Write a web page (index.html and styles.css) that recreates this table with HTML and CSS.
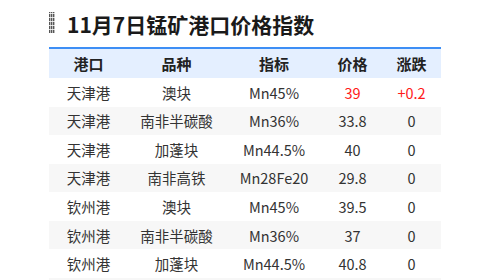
FILE: index.html
```html
<!DOCTYPE html>
<html lang="zh-CN">
<head>
<meta charset="utf-8">
<title>11月7日锰矿港口价格指数</title>
<link rel="stylesheet" href="styles.css">
</head>
<body>
<div class="wrap">
  <div class="title">
    <span class="mark"></span>
    <h1>11月7日锰矿港口价格指数</h1>
  </div>
  <table class="prices">
    <colgroup>
      <col class="c1"><col class="c2"><col class="c3"><col class="c4"><col class="c5">
    </colgroup>
    <thead>
      <tr><th>港口</th><th>品种</th><th>指标</th><th>价格</th><th>涨跌</th></tr>
    </thead>
    <tbody>
      <tr><td>天津港</td><td>澳块</td><td>Mn45%</td><td class="up">39</td><td class="up">+0.2</td></tr>
      <tr><td>天津港</td><td>南非半碳酸</td><td>Mn36%</td><td>33.8</td><td>0</td></tr>
      <tr><td>天津港</td><td>加蓬块</td><td>Mn44.5%</td><td>40</td><td>0</td></tr>
      <tr><td>天津港</td><td>南非高铁</td><td>Mn28Fe20</td><td>29.8</td><td>0</td></tr>
      <tr><td>钦州港</td><td>澳块</td><td>Mn45%</td><td>39.5</td><td>0</td></tr>
      <tr><td>钦州港</td><td>南非半碳酸</td><td>Mn36%</td><td>37</td><td>0</td></tr>
      <tr><td>钦州港</td><td>加蓬块</td><td>Mn44.5%</td><td>40.8</td><td>0</td></tr>
      <tr><td>钦州港</td><td>南非高铁</td><td>Mn28Fe20</td><td>29.8</td><td>0</td></tr>
    </tbody>
  </table>
</div>
</body>
</html>
```
FILE: styles.css
```css
html, body {
  margin: 0;
  padding: 0;
  background: #ffffff;
}
body {
  font-family: "Noto Sans CJK SC", "Noto Sans", sans-serif;
  color: #333333;
  overflow: hidden;
}
.wrap {
  width: 392px;
  margin: 0 auto;
  padding-top: 10px;
}
.title {
  display: flex;
  align-items: flex-start;
  gap: 12px;
  height: 37px;
}
.mark {
  width: 6px;
  height: 21px;
  margin-top: 2px;
  background:
    repeating-linear-gradient(0deg, rgba(255,255,255,0) 0 3px, rgba(255,255,255,0.8) 3px 4px),
    repeating-linear-gradient(90deg, #555 0 1px, #bbb 1px 2px);
}
.title h1 {
  margin: 0;
  font-size: 21px;
  line-height: 28px;
  font-weight: 700;
  color: #1a1a1a;
}
.prices {
  width: 392px;
  border-collapse: collapse;
  table-layout: fixed;
  border-top: 2px solid #3d8ef5;
}
.c1 { width: 79px; }
.c2 { width: 97px; }
.c3 { width: 98px; }
.c4 { width: 59px; }
.c5 { width: 59px; }
.prices th, .prices td {
  padding: 0;
  text-align: center;
  white-space: nowrap;
}
.prices thead tr {
  background: #e4efff;
  height: 30px;
}
.prices th {
  font-size: 15px;
  font-weight: 700;
  color: #222222;
}
.prices tbody tr {
  height: 28.57px;
}
.prices td {
  font-size: 14.5px;
  color: #333333;
}
.prices tbody tr:nth-child(even) {
  background: #f7f7f7;
}
.prices td.up {
  color: #ff1a1a;
}
```
